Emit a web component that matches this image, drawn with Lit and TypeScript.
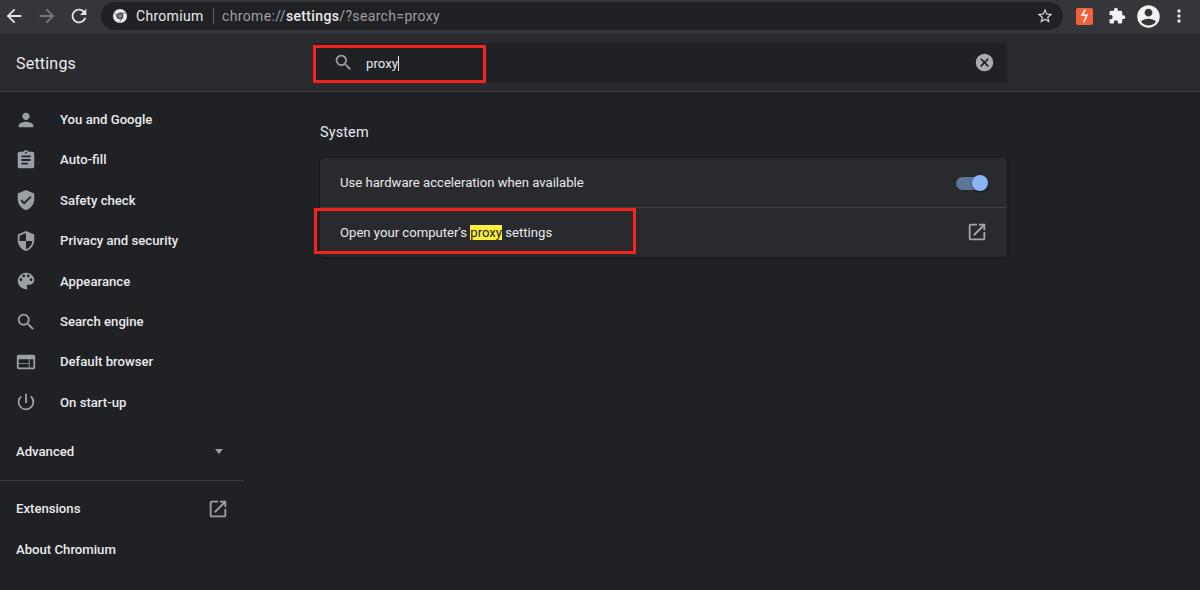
import { LitElement, html, css, svg } from "lit";
import { customElement } from "lit/decorators.js";

const mat = (d: unknown, size = 22, cls = "") => html`<svg class=${cls} width=${size} height=${size} viewBox="0 0 24 24" fill="currentColor">${d}</svg>`;

const ICONS = {
  person: svg`<path d="M12 12c2.200 0 4-1.800 4-4s-1.800-4-4-4-4 1.800-4 4 1.800 4 4 4zm0 2c-2.700 0-8 1.300-8 4v2h16v-2c0-2.700-5.300-4-8-4z"/>`,
  clipboard: svg`<path d="M19 3h-4.180C14.400 1.840 13.300 1 12 1s-2.400.84-2.820 2H5c-1.100 0-2 .9-2 2v14c0 1.100.9 2 2 2h14c1.100 0 2-.9 2-2V5c0-1.100-.9-2-2-2zm-7 0c.55 0 1 .45 1 1s-.45 1-1 1-1-.45-1-1 .45-1 1-1zm2 14H7v-2h7v2zm3-4H7v-2h10v2zm0-4H7V7h10v2z"/>`,
  shieldCheck: svg`<path d="M12 1 3 5v6c0 5.550 3.840 10.740 9 12 5.160-1.260 9-6.450 9-12V5l-9-4zm-2 16-4-4 1.410-1.410L10 14.170l6.590-6.590L18 9l-8 8z"/>`,
  shieldHalf: svg`<path d="M12 1 3 5v6c0 5.550 3.840 10.740 9 12 5.160-1.260 9-6.450 9-12V5l-9-4zm0 10.990h7c-.53 4.120-3.280 7.790-7 8.940V12H5V6.300l7-3.110v8.800z"/>`,
  palette: svg`<path d="M12 3a9 9 0 0 0 0 18c.83 0 1.500-.67 1.500-1.500 0-.39-.15-.74-.39-1.010-.23-.26-.38-.61-.38-.99 0-.83.67-1.500 1.500-1.500H16c2.760 0 5-2.240 5-5 0-4.420-4.030-8-9-8zm-5.500 9a1.500 1.500 0 1 1 0-3 1.500 1.500 0 0 1 0 3zm3-4a1.500 1.500 0 1 1 0-3 1.500 1.500 0 0 1 0 3zm5 0a1.500 1.500 0 1 1 0-3 1.500 1.500 0 0 1 0 3zm3 4a1.500 1.500 0 1 1 0-3 1.500 1.500 0 0 1 0 3z"/>`,
  search: svg`<path d="M15.500 14h-.79l-.28-.27A6.470 6.470 0 0 0 16 9.500 6.500 6.500 0 1 0 9.500 16c1.610 0 3.090-.59 4.230-1.570l.27.28v.79l5 4.990L20.490 19l-4.990-5zm-6 0C7.010 14 5 11.990 5 9.500S7.010 5 9.500 5 14 7.010 14 9.500 11.990 14 9.500 14z"/>`,
  browser: svg`<path d="M20 4H4c-1.100 0-2 .9-2 2v12c0 1.100.9 2 2 2h16c1.100 0 2-.9 2-2V6c0-1.100-.9-2-2-2zm-5 14H4v-4h11v4zm0-5H4V9h11v4zm5 5h-4V9h4v9z"/>`,
  power: svg`<path d="M13 3h-2v10h2V3zm4.830 2.170-1.420 1.420A6.920 6.920 0 0 1 19 12c0 3.870-3.130 7-7 7A6.995 6.995 0 0 1 7.580 6.580L6.170 5.170A8.932 8.932 0 0 0 3 12a9 9 0 0 0 18 0c0-2.740-1.230-5.180-3.170-6.830z"/>`,
  external: svg`<path d="M19 19H5V5h7V3H5a2 2 0 0 0-2 2v14a2 2 0 0 0 2 2h14c1.100 0 2-.9 2-2v-7h-2v7zM14 3v2h3.590l-9.830 9.830 1.410 1.410L19 6.410V10h2V3h-7z"/>`,
  back: svg`<path d="M20 11H7.830l5.590-5.590L12 4l-8 8 8 8 1.410-1.410L7.830 13H20v-2z"/>`,
  forward: svg`<path d="M12 4l-1.410 1.410L16.170 11H4v2h12.170l-5.580 5.590L12 20l8-8z"/>`,
  reload: svg`<path d="M17.650 6.350A7.958 7.958 0 0 0 12 4c-4.420 0-7.990 3.580-7.990 8s3.570 8 7.990 8c3.730 0 6.840-2.550 7.730-6h-2.080A5.990 5.990 0 0 1 12 18c-3.310 0-6-2.690-6-6s2.690-6 6-6c1.660 0 3.140.69 4.220 1.780L13 11h7V4l-2.350 2.350z"/>`,
  star: svg`<path d="M22 9.240l-7.190-.62L12 2 9.190 8.630 2 9.240l5.460 4.730L5.820 21 12 17.270 18.180 21l-1.630-7.030L22 9.240zM12 15.400l-3.760 2.270 1-4.280-3.320-2.880 4.380-.38L12 6.100l1.710 4.040 4.380.38-3.320 2.880 1 4.280L12 15.400z"/>`,
  puzzle: svg`<path d="M20.500 11H19V7c0-1.100-.9-2-2-2h-4V3.500a2.500 2.500 0 0 0-5 0V5H4c-1.100 0-1.990.9-1.990 2v3.800H3.500c1.490 0 2.700 1.210 2.700 2.700s-1.210 2.700-2.700 2.700H2V20c0 1.100.9 2 2 2h3.800v-1.500c0-1.490 1.210-2.700 2.700-2.700s2.700 1.210 2.700 2.700V22H17c1.100 0 2-.9 2-2v-4h1.500a2.500 2.500 0 0 0 0-5z"/>`,
  account: svg`<path d="M12 2C6.480 2 2 6.480 2 12s4.480 10 10 10 10-4.480 10-10S17.520 2 12 2zm0 3c1.930 0 3.500 1.570 3.500 3.500S13.930 12 12 12s-3.500-1.570-3.500-3.500S10.070 5 12 5zm0 15c-2.700 0-5.090-1.300-6.600-3.320C6.130 14.900 10 14 12 14s5.870.9 6.600 2.680A8.230 8.230 0 0 1 12 20z"/>`,
  more: svg`<path d="M12 8a2 2 0 1 0 0-4 2 2 0 0 0 0 4zm0 2a2 2 0 1 0 0 4 2 2 0 0 0 0-4zm0 6a2 2 0 1 0 0 4 2 2 0 0 0 0-4z"/>`,
  clear: svg`<path d="M12 2a10 10 0 1 0 0 20 10 10 0 0 0 0-20zm5 13.590L15.590 17 12 13.410 8.410 17 7 15.590 10.590 12 7 8.410 8.410 7 12 10.590 15.590 7 17 8.410 13.410 12 17 15.590z"/>`,
};

const NAV: [string, unknown][] = [
  ["You and Google", ICONS.person],
  ["Auto-fill", ICONS.clipboard],
  ["Safety check", ICONS.shieldCheck],
  ["Privacy and security", ICONS.shieldHalf],
  ["Appearance", ICONS.palette],
  ["Search engine", ICONS.search],
  ["Default browser", ICONS.browser],
  ["On start-up", ICONS.power],
];

@customElement("app-root")
export class AppRoot extends LitElement {
  static styles = css`
    :host { display: block; width: 1200px; height: 590px; overflow: hidden; position: relative;
      background: #202124; font-family: Roboto, "Liberation Sans", sans-serif; color: #e8eaed; }
    * { box-sizing: border-box; }
    svg { display: block; flex: none; }

    .toolbar { height: 34px; background: #35363a; display: flex; align-items: center; padding-bottom: 2px; }
    .nav-btns { width: 101px; display: flex; flex: none; padding-left: 3px; gap: 10.500px; color: #e3e5e8; }
    .nav-btns .off { color: #75777b; }
    .omni { width: 962px; height: 28px; flex: none; background: #202124; border-radius: 14px; display: flex; align-items: center; padding: 0 9px 0 12px; font-size: 14px; }
    .globe { margin-right: 9px; }
    .site { color: #e8eaed; letter-spacing: .3px; }
    .sep { width: 1px; height: 16px; background: #5f6368; margin: 0 8.500px 0 9px; }
    .url { color: #9aa0a6; letter-spacing: .35px; flex: 1; }
    .url b { color: #e8eaed; font-weight: 500; }
    .star { color: #d6d8db; }
    .tools { flex: 1; display: flex; align-items: center; padding-left: 13px; }
    .ext { width: 17px; height: 17px; background: #f2613a; border-radius: 2px; display: flex; align-items: center; justify-content: center; margin-right: 15px; }
    .puzzle { color: #f1f3f4; margin-right: 9px; }
    .acct { color: #f1f3f4; margin-right: 7px; }
    .more { color: #e3e5e8; }

    .header { height: 58px; background: #292a2d; border-bottom: 1px solid #3f4043; display: flex; align-items: center; }
    .title { width: 314px; flex: none; padding: 1px 0 0 16px; font-size: 16px; letter-spacing: .2px; color: #e8eaed; }
    .searchbox { width: 693px; height: 40px; background: #202124; border-radius: 2px; display: flex; align-items: center; padding: 0 12px 0 19px; }
    .searchbox .s { color: #9aa0a6; margin-right: 12px; }
    .q { flex: 1; display: flex; align-items: center; color: #e8eaed; font-size: 13.200px; padding-top: 1px; }
    .caret { width: 1px; height: 15px; background: #e8eaed; }
    .clear { color: #a8abaf; }

    .body { display: flex; }
    .side { width: 244px; flex: none; font-size: 13.150px; font-weight: 500; color: #e8eaed; padding-top: 7.400px; }
    .item { height: 40.400px; display: flex; align-items: center; padding-left: 16px; }
    .item svg { color: #9aa0a6; margin-right: 23px; margin-left: -1px; }
    .adv { height: 40px; margin-top: 8.600px; display: flex; align-items: center; justify-content: space-between; padding: 0 21px 0 16px; }
    .caretd { width: 0; height: 0; border: 4.500px solid transparent; border-top: 5px solid #9aa0a6; border-bottom: 0; }
    .rule { height: 1px; background: #3a3b3e; margin-top: 9px; margin-bottom: 7.400px; }
    .row { height: 40.400px; display: flex; align-items: center; justify-content: space-between; padding: 0 15px 0 16px; }
    .row svg { color: #9aa0a6; }

    .main { flex: 1; padding: 32px 0 0 76px; }
    .h2 { font-size: 14.500px; color: #e8eaed; margin-bottom: 16px; line-height: 18px; letter-spacing: .1px; }
    .card { width: 687px; background: #292a2d; border-radius: 4px; box-shadow: 0 1px 3px rgba(0,0,0,.45); font-size: 13.120px; color: #e8eaed; }
    .r1 { height: 49px; display: flex; align-items: center; justify-content: space-between; padding: 0 19px 0 20px; }
    .r2 { height: 50px; padding: 0 19px 1px 20px; display: flex; align-items: center; justify-content: space-between; border-top: 1px solid #3f4043; }
    .r2 svg { color: #a3a6aa; }
    mark { background: #fcee3b; color: #202124; }
    .toggle { width: 32px; height: 16px; position: relative; }
    .track { position: absolute; left: 0; top: 2px; width: 30px; height: 13px; border-radius: 7px; background: #5f7597; }
    .knob { position: absolute; right: 0; top: 0; width: 16px; height: 16px; border-radius: 50%; background: #8ab4f8; box-shadow: 0 1px 2px rgba(0,0,0,.5); }

    .mark1, .mark2 { position: absolute; border: 3px solid #f5241c; }
    .mark1 { left: 313px; top: 45px; width: 173px; height: 38px; }
    .mark2 { left: 314px; top: 208px; width: 322px; height: 46px; }
  `;

  render() {
    return html`
      <div class="toolbar">
        <div class="nav-btns">
          ${mat(ICONS.back)}
          <span class="off">${mat(ICONS.forward)}</span>
          ${mat(ICONS.reload)}
        </div>
        <div class="omni">
          <svg class="globe" width="14" height="14" viewBox="0 0 24 24">
            <circle cx="12" cy="12" r="12" fill="#e8eaed"/>
            <path d="M12 7h10M8 15 3 6M16.500 14.500 11 23" stroke="#5f6368" stroke-width="1.500" fill="none"/>
            <circle cx="12" cy="12" r="5" fill="#7a7d82" stroke="#202124" stroke-width="1.500"/>
          </svg>
          <span class="site">Chromium</span><span class="sep"></span>
          <span class="url">chrome://<b>settings</b>/?search=proxy</span>
          <span class="star">${mat(ICONS.star, 18)}</span>
        </div>
        <div class="tools">
          <div class="ext">
            <svg width="11" height="14" viewBox="0 0 11 14" fill="none" stroke="#fff" stroke-width="1.500"><path d="M6.500 0.500 3 6h5l-3.500 7.500"/></svg>
          </div>
          <span class="puzzle">${mat(ICONS.puzzle, 18)}</span>
          <span class="acct">${mat(ICONS.account, 27)}</span>
          <span class="more">${mat(ICONS.more, 20)}</span>
        </div>
      </div>
      <div class="header">
        <div class="title">Settings</div>
        <div class="searchbox">
          <span class="s">${mat(ICONS.search, 21)}</span>
          <div class="q">proxy<span class="caret"></span></div>
          <span class="clear">${mat(ICONS.clear, 21)}</span>
        </div>
      </div>
      <div class="body">
        <nav class="side">
          ${NAV.map(([label, icon]) => html`<div class="item">${mat(icon)}<span>${label}</span></div>`)}
          <div class="adv"><span>Advanced</span><span class="caretd"></span></div>
          <div class="rule"></div>
          <div class="row"><span>Extensions</span>${mat(ICONS.external, 22)}</div>
          <div class="row"><span>About Chromium</span></div>
        </nav>
        <main class="main">
          <div class="h2">System</div>
          <div class="card">
            <div class="r1"><span>Use hardware acceleration when available</span>
              <div class="toggle"><span class="track"></span><span class="knob"></span></div></div>
            <div class="r2"><span>Open your computer's <mark>proxy</mark> settings</span>${mat(ICONS.external, 22)}</div>
          </div>
        </main>
      </div>
      <div class="mark1"></div>
      <div class="mark2"></div>
    `;
  }
}
